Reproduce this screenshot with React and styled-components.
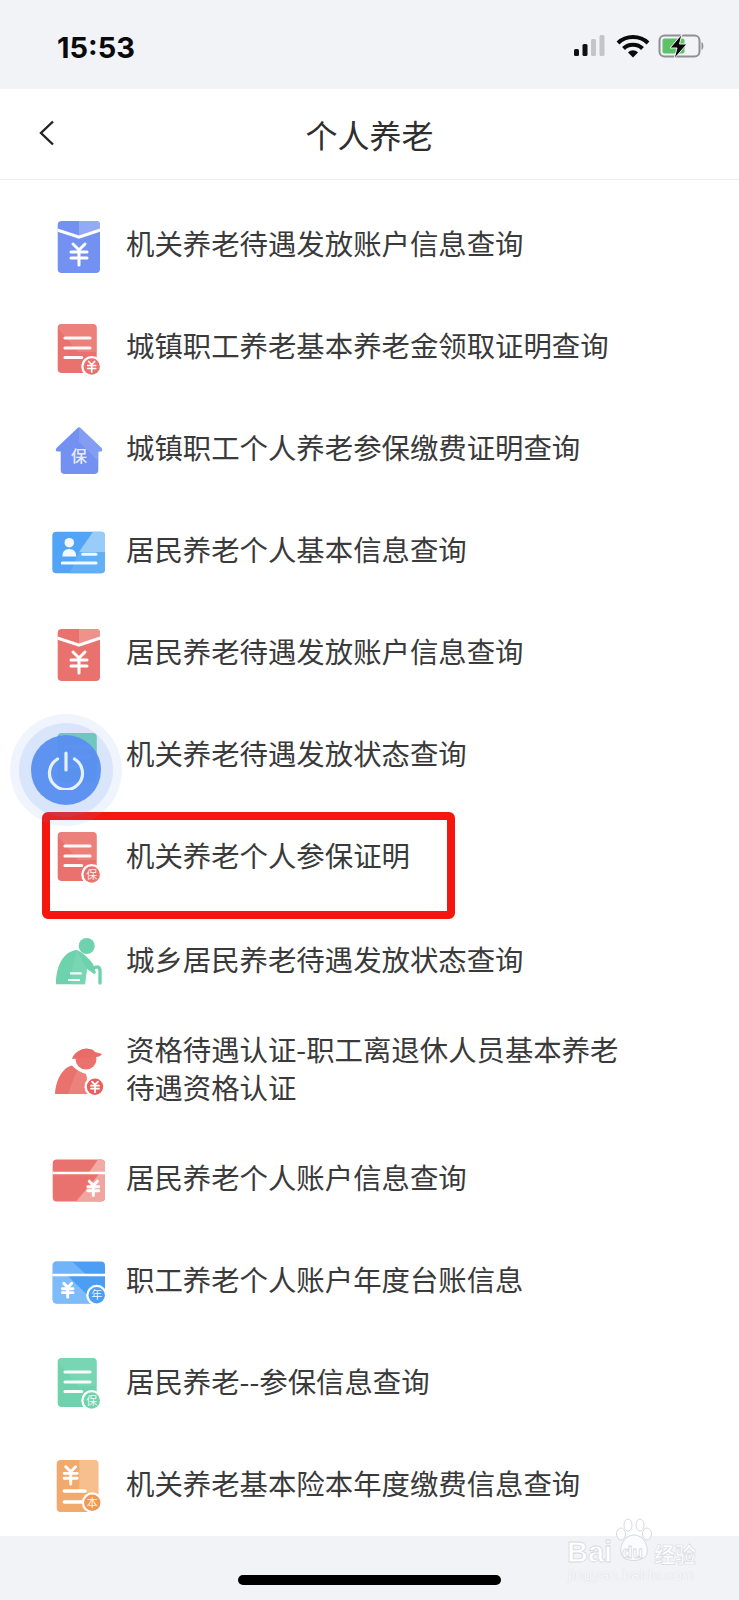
import styled, { createGlobalStyle } from 'styled-components';

const GlobalStyle = createGlobalStyle`
  html, body {
    margin: 0;
    padding: 0;
    background: #fff;
  }
  body {
    font-family: "Noto Sans CJK SC", "Liberation Sans", sans-serif;
  }
`;

const Page = styled.div`
  position: relative;
  width: 739px;
  height: 1600px;
  overflow: hidden;
  background: #fff;
  display: flex;
  flex-direction: column;
`;

const StatusBar = styled.div`
  height: 89px;
  flex: none;
  box-sizing: border-box;
  background: #f1f3f7;
  padding: 28px 31px 0 57px;
  display: flex;
  justify-content: space-between;
  align-items: flex-start;
`;

const Clock = styled.div`
  font-family: Inter, "Liberation Sans", sans-serif;
  font-weight: 700;
  font-size: 29px;
  line-height: 40px;
  color: #0a0a0a;
`;

const StatusIcons = styled.svg`
  width: 134px;
  height: 26px;
  margin-top: 6px;
`;

const NavBar = styled.div`
  position: relative;
  height: 91px;
  flex: none;
  box-sizing: border-box;
  background: #fff;
  border-bottom: 1px solid #eeeeee;
  display: flex;
  align-items: center;
  justify-content: center;
`;

const BackIcon = styled.svg`
  position: absolute;
  left: 38px;
  top: 30px;
  width: 18px;
  height: 28px;
`;

const Title = styled.div`
  font-size: 32px;
  font-weight: 400;
  color: #2e2e2e;
  line-height: 44px;
`;

const List = styled.div`
  flex: 1;
  padding-top: 14px;
  display: flex;
  flex-direction: column;
`;

const Row = styled.div`
  position: relative;
  box-sizing: border-box;
  min-height: 102px;
  margin-top: ${(p) => (p.$gap ? '2px' : '0')};
  padding-left: 46px;
  display: flex;
  align-items: center;
  gap: 16px;
`;

const IconBox = styled.svg`
  width: 64px;
  height: 64px;
  flex: none;
`;

const Label = styled.div`
  width: 500px;
  margin: 20px 0;
  font-size: 28.4px;
  line-height: 38px;
  color: #3a3a3a;
  position: relative;
  top: -2px;
`;

const RedFrame = styled.div`
  position: absolute;
  left: 42px;
  top: 6px;
  width: 413px;
  height: 107px;
  box-sizing: border-box;
  border: 8px solid #f5170f;
  border-radius: 6px;
`;

const FloatRing = styled.div`
  position: absolute;
  left: 10px;
  top: 714px;
  width: 112px;
  height: 112px;
  border-radius: 50%;
  background: rgba(96, 146, 240, 0.1);
  display: flex;
  align-items: center;
  justify-content: center;
`;

const FloatRingInner = styled.div`
  width: 94px;
  height: 94px;
  border-radius: 50%;
  background: rgba(96, 146, 240, 0.15);
  display: flex;
  align-items: center;
  justify-content: center;
`;

const FloatButton = styled.div`
  width: 70px;
  height: 70px;
  border-radius: 50%;
  background: rgba(88, 142, 240, 0.95);
  display: flex;
  align-items: center;
  justify-content: center;
`;

const BottomBar = styled.div`
  height: 64px;
  flex: none;
  background: #f1f3f7;
  display: flex;
  justify-content: center;
  padding-top: 39px;
  box-sizing: border-box;
`;

const HomeIndicator = styled.div`
  width: 263px;
  height: 10px;
  border-radius: 5px;
  background: #000;
`;

const Watermark = styled.div`
  position: absolute;
  left: 566px;
  top: 1518px;
  width: 140px;
  height: 70px;
`;

const WatermarkArt = styled.svg`
  position: absolute;
  left: 0;
  top: 0;
  width: 140px;
  height: 50px;
`;

const WatermarkUrl = styled.div`
  position: absolute;
  left: 2px;
  top: 48px;
  font-family: "Liberation Sans", sans-serif;
  font-size: 15.5px;
  line-height: 18px;
  letter-spacing: 0.1px;
  color: rgba(255, 255, 255, 0.85);
  text-shadow: 0 0 1px rgba(190, 194, 204, 0.8);
  white-space: nowrap;
`;

const PALETTE = {
  blue: ['#7391f1', '#93aaf6'],
  red: ['#ea726e', '#f0928c'],
  green: ['#6ed2ac', '#88dcbd'],
  orange: ['#f1a96c', '#f5bf8e'],
  sky: ['#4c9ef5', '#7dbcf8'],
};

function Yen({ x, y, s = 1, color = '#fff', w = 3 }) {
  return (
    <g transform={`translate(${x} ${y}) scale(${s})`} fill="none" stroke={color} strokeWidth={w} strokeLinecap="round">
      <path d="M-6 -10 L0 -4 L6 -10" />
      <path d="M-8 -2 H8 M-8 4 H8 M0 -4 V11" />
    </g>
  );
}

function Badge({ x, y, text, color, yen }) {
  return (
    <g>
      <circle cx={x} cy={y} r="10.5" fill="#fff" />
      <circle cx={x} cy={y} r="8.2" fill={color} />
      {yen ? (
        <Yen x={x} y={y} s={0.5} w={3.4} />
      ) : (
        <text x={x} y={y + 4} fontSize="11" textAnchor="middle" fill="#fff" opacity="0.9" fontFamily='"Noto Sans CJK SC", sans-serif'>
          {text}
        </text>
      )}
    </g>
  );
}

function Envelope({ tone }) {
  const [a, b] = PALETTE[tone];
  return (
    <IconBox viewBox="0 0 64 64">
      <rect x="11.7" y="8" width="42.3" height="52" rx="4" fill={a} />
      <path d="M33 8 H50 a4 4 0 0 1 4 4 V16 L33 24 Z" fill={b} />
      <path d="M11.7 15.5 L33 22.5 L54 15.5 V18.8 L33 25.8 L11.7 18.8 Z" fill="#fff" />
      <Yen x={33} y={41} />
    </IconBox>
  );
}

function DocIcon({ tone, badge, yen, top = 8 }) {
  const [a, b] = PALETTE[tone];
  const y = top;
  return (
    <IconBox viewBox="0 0 64 64">
      <rect x="11.7" y={y} width="39" height="49" rx="4" fill={a} />
      <path d={`M11.7 ${y + 4} L32 ${y + 28} H50.7 V${y + 4} a4 4 0 0 0 -4 -4 H15.7 Z`} fill={b} opacity="0.45" />
      <path d={`M19 ${y + 14} H44 M19 ${y + 24} H44 M19 ${y + 33.5} H35.7`} stroke="#fff" strokeWidth="3.2" strokeLinecap="round" fill="none" opacity="0.95" />
      {badge || yen ? <Badge x={45.7} y={y + 42.5} text={badge} yen={yen} color={a} /> : null}
    </IconBox>
  );
}

function HouseIcon() {
  const [a, b] = PALETTE.blue;
  return (
    <IconBox viewBox="0 0 64 64">
      <path d="M31.5 11 Q33 9.6 34.5 11 L55.5 31 Q57.5 34.5 54 34.5 H52.3 V53 a4 4 0 0 1 -4 4 H18.7 a4 4 0 0 1 -4 -4 V34.5 H12 Q8.5 34.5 10.5 31 Z" fill={a} />
      <path d="M34.5 11 L55.5 31 Q57.5 34.5 54 34.5 H52.3 V44 L33 25 V10 Z" fill={b} opacity="0.5" />
      <text x="33" y="45" fontSize="16" fontWeight="500" textAnchor="middle" fill="#e8edff" fontFamily='"Noto Sans CJK SC", sans-serif'>保</text>
    </IconBox>
  );
}

function IdCardIcon() {
  return (
    <IconBox viewBox="0 0 64 64">
      <rect x="6.3" y="12.7" width="52.7" height="41.6" rx="4" fill="#52a4f6" />
      <path d="M47 12.7 H55 a4 4 0 0 1 4 4 V33 H33 Z" fill="#9accfa" />
      <path d="M33 33 H59 V50 a4 4 0 0 1 -4 4.3 H24 Z" fill="#62aff8" />
      <circle cx="23.3" cy="23.7" r="4.8" fill="#f2f8ff" />
      <path d="M16.3 37.5 Q16.3 30 23.3 30 Q30.3 30 30.3 37.5 Z" fill="#f2f8ff" />
      <path d="M36.7 35.3 H50 M16.3 44 H50" stroke="#f2f8ff" strokeWidth="3" strokeLinecap="round" />
    </IconBox>
  );
}

function ElderIcon() {
  const [a, b] = PALETTE.green;
  return (
    <IconBox viewBox="0 0 64 64">
      <circle cx="40.7" cy="17" r="8" fill={a} />
      <path d="M10 55.3 C10 36 18 22 31 21 C37 24 43 29 47 35 L50 44 Q47 46 45.5 43 L41 40 L39 55.3 Z" fill={a} />
      <path d="M25 55.3 L39 55.3 L41 40 L31 21 C28 30 25 45 25 55.3 Z" fill={b} opacity="0.45" />
      <path d="M46.5 39.5 Q54 35.5 54 42 V54" stroke={a} strokeWidth="3.4" strokeLinecap="round" fill="none" />
      <path d="M24 44.3 H35.7 M22 51 H34" stroke="#fff" strokeWidth="2.2" opacity="0.95" />
    </IconBox>
  );
}

function WorkerIcon() {
  const [a, b] = PALETTE.red;
  return (
    <IconBox viewBox="0 0 64 64">
      <circle cx="40" cy="21" r="10.5" fill={a} />
      <path d="M26 21 C29 10 46 8 49 14 L56 16 Q54 19 50 19 Z" fill="#ea6b67" />
      <path d="M9 56 C10 40 18 29 26 27.5 C30 32 35 35 40 36 L44 56 Z" fill={a} />
      <path d="M22 56 C25 48 28 38 32 32 C35 34 38 35.5 40 36 L44 56 Z" fill={b} opacity="0.5" />
      <Badge x={49} y={48.7} color="#e8615e" yen />
    </IconBox>
  );
}

function CardIcon({ tone, flip, badge }) {
  const [a, b] = PALETTE[tone];
  return (
    <IconBox viewBox="0 0 64 64">
      <rect x="6.7" y="12.5" width="52.3" height="42" rx="4" fill={a} />
      {flip ? (
        <>
          <path d="M9 12.5 H26 L40 25.3 H6.7 V15 Z" fill={b} opacity="0.75" />
          <path d="M6.7 27 H22 L50 54.5 H10.7 a4 4 0 0 1 -4 -4 Z" fill={b} />
          <Yen x={21.7} y={41} s={0.66} w={4.4} />
          <Badge x={50.7} y={46.3} text={badge} color={a} />
        </>
      ) : (
        <>
          <path d="M59 16 V25.3 H43 L52 12.5 H55 a4 4 0 0 1 4 3.5 Z" fill="#f2aaa6" />
          <path d="M59 27 V50.5 a4 4 0 0 1 -4 4 H30 L53 27 Z" fill="#f0a5a1" />
          <Yen x={47.3} y={41} s={0.68} w={4.4} />
        </>
      )}
      <path d="M6.7 26 H59" stroke="#fff" strokeWidth="2.4" />
    </IconBox>
  );
}

function LedgerIcon() {
  const [a, b] = PALETTE.orange;
  return (
    <IconBox viewBox="0 0 64 64">
      <rect x="10.7" y="7" width="41.6" height="52" rx="4" fill={a} />
      <path d="M33.3 7 H48.3 a4 4 0 0 1 4 4 V40 H33.3 Z" fill={b} />
      <Yen x={24.7} y={22} s={0.82} w={3.6} />
      <path d="M18.3 38 H39 M18.3 49 H35.7" stroke="#fff" strokeWidth="3.4" strokeLinecap="round" />
      <Badge x={46.3} y={49.7} text="本" color="#ec9a55" />
    </IconBox>
  );
}

const ROWS = [
  { text: '机关养老待遇发放账户信息查询', icon: <Envelope tone="blue" /> },
  { text: '城镇职工养老基本养老金领取证明查询', icon: <DocIcon tone="red" yen top={9} /> },
  { text: '城镇职工个人养老参保缴费证明查询', icon: <HouseIcon /> },
  { text: '居民养老个人基本信息查询', icon: <IdCardIcon /> },
  { text: '居民养老待遇发放账户信息查询', icon: <Envelope tone="red" /> },
  { text: '机关养老待遇发放状态查询', icon: <DocIcon tone="green" top={10} /> },
  { text: '机关养老个人参保证明', icon: <DocIcon tone="red" badge="保" top={7} />, highlight: true },
  { text: '城乡居民养老待遇发放状态查询', icon: <ElderIcon />, gap: true },
  { text: '资格待遇认证-职工离退休人员基本养老待遇资格认证', icon: <WorkerIcon /> },
  { text: '居民养老个人账户信息查询', icon: <CardIcon tone="red" /> },
  { text: '职工养老个人账户年度台账信息', icon: <CardIcon tone="sky" flip badge="年" /> },
  { text: '居民养老--参保信息查询', icon: <DocIcon tone="green" badge="保" top={7} /> },
  { text: '机关养老基本险本年度缴费信息查询', icon: <LedgerIcon /> },
];

export default function App() {
  return (
    <Page>
      <GlobalStyle />
      <StatusBar>
        <Clock>15:53</Clock>
        <StatusIcons viewBox="0 0 134 26">
          {/* signal */}
          <rect x="0" y="15" width="5" height="7" rx="1.5" fill="#111" />
          <rect x="8.5" y="10" width="5" height="12" rx="1.5" fill="#111" />
          <rect x="17" y="5" width="5" height="17" rx="1.5" fill="#c4c5c9" />
          <rect x="25.5" y="1" width="5" height="21" rx="1.5" fill="#c4c5c9" />
          {/* wifi */}
          <g fill="none" stroke="#0a0a0a" strokeWidth="4">
            <path d="M44 9 C52 1 66 1 74 9" />
            <path d="M49.5 14.5 C54.5 9.5 63.5 9.5 68.5 14.5" />
          </g>
          <path d="M54 18.5 C57 15.5 61 15.5 64 18.5 L59 23.5 Z" fill="#0a0a0a" />
          {/* battery */}
          <rect x="85.5" y="1.5" width="40" height="21" rx="5" fill="none" stroke="#8f9094" strokeWidth="2" />
          <rect x="88.5" y="4.5" width="22" height="15" rx="2" fill="#5fc168" />
          <path d="M127.5 8 C130 9 130 15 127.5 16 Z" fill="#8f9094" />
          <path d="M108 0 L96 14 H103 L100 25 L113 10 H105.5 Z" fill="#0a0a0a" stroke="#f1f3f7" strokeWidth="1" />
        </StatusIcons>
      </StatusBar>

      <NavBar>
        <BackIcon viewBox="0 0 18 28">
          <path d="M15 2.5 L3 14 L15 25.5" fill="none" stroke="#222" strokeWidth="2.4" />
        </BackIcon>
        <Title>个人养老</Title>
      </NavBar>

      <List>
        {ROWS.map((row) => (
          <Row key={row.text} $gap={row.gap}>
            {row.icon}
            <Label>{row.text}</Label>
            {row.highlight ? <RedFrame /> : null}
          </Row>
        ))}
      </List>

      <BottomBar>
        <HomeIndicator />
      </BottomBar>

      <FloatRing>
        <FloatRingInner>
          <FloatButton>
            <svg width="40" height="40" viewBox="0 0 40 40" fill="none" stroke="#e6f0ff" strokeWidth="3.2" strokeLinecap="round">
              <path d="M11.5 9 A16.5 16.5 0 1 0 28.5 9" />
              <path d="M20 3 V20" />
            </svg>
          </FloatButton>
        </FloatRingInner>
      </FloatRing>

      <Watermark>
        <WatermarkArt viewBox="0 0 140 50">
          <g fill="#fff" fillOpacity="0.7" stroke="#d6d9e0" strokeWidth="1">
            <ellipse cx="55" cy="16" rx="4.5" ry="6" />
            <ellipse cx="62" cy="7" rx="4" ry="6" />
            <ellipse cx="74" cy="7" rx="4" ry="6" />
            <ellipse cx="81" cy="16" rx="4.5" ry="6" />
            <path d="M68 17 C78 17 84 30 80 38 C75 44 60 44 56 38 C52 30 58 17 68 17 Z" />
          </g>
          <g fontFamily='"Liberation Sans", sans-serif' fontWeight="700" fill="#fff" stroke="#d6d9e0" strokeWidth="0.8">
            <text x="1" y="44" fontSize="29">Bai</text>
            <text x="56" y="40" fontSize="17">du</text>
          </g>
          <text x="88" y="44" fontSize="21" fontWeight="700" fill="#fff" stroke="#d6d9e0" strokeWidth="0.6" fontFamily='"Noto Sans CJK SC", sans-serif'>经验</text>
        </WatermarkArt>
        <WatermarkUrl>jingyan.baidu.com</WatermarkUrl>
      </Watermark>
    </Page>
  );
}
